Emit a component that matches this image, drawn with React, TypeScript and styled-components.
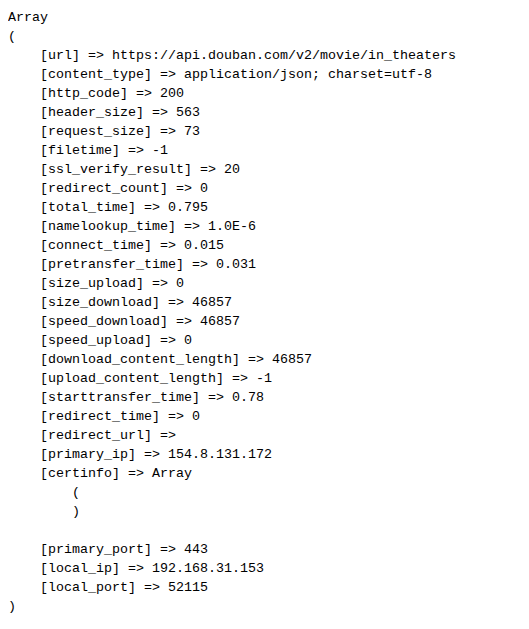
import React from "react";
import styled, { createGlobalStyle } from "styled-components";

const Global = createGlobalStyle`
  html, body { margin: 0; padding: 0; background: #ffffff; }
  body { margin: 8px; }
`;

const Dump = styled.pre`
  margin: 0;
  font-family: "Liberation Mono", "DejaVu Sans Mono", monospace;
  font-size: 13.333px;
  line-height: 19px;
  color: #000000;
  white-space: pre;
`;

const Line = styled.div<{ $indent: number }>`
  padding-left: ${(p) => p.$indent * 8}px;
  height: 19px;
`;

const entries: [string, string][] = [
  ["url", "https://api.douban.com/v2/movie/in_theaters"],
  ["content_type", "application/json; charset=utf-8"],
  ["http_code", "200"],
  ["header_size", "563"],
  ["request_size", "73"],
  ["filetime", "-1"],
  ["ssl_verify_result", "20"],
  ["redirect_count", "0"],
  ["total_time", "0.795"],
  ["namelookup_time", "1.0E-6"],
  ["connect_time", "0.015"],
  ["pretransfer_time", "0.031"],
  ["size_upload", "0"],
  ["size_download", "46857"],
  ["speed_download", "46857"],
  ["speed_upload", "0"],
  ["download_content_length", "46857"],
  ["upload_content_length", "-1"],
  ["starttransfer_time", "0.78"],
  ["redirect_time", "0"],
  ["redirect_url", ""],
  ["primary_ip", "154.8.131.172"],
];

const tail: [string, string][] = [
  ["primary_port", "443"],
  ["local_ip", "192.168.31.153"],
  ["local_port", "52115"],
];

export default function App() {
  return (
    <>
      <Global />
      <Dump>
        <Line $indent={0}>Array</Line>
        <Line $indent={0}>(</Line>
        {entries.map(([k, v]) => (
          <Line key={k} $indent={4}>{`[${k}] => ${v}`}</Line>
        ))}
        <Line $indent={4}>{"[certinfo] => Array"}</Line>
        <Line $indent={8}>(</Line>
        <Line $indent={8}>)</Line>
        <Line $indent={0}>{" "}</Line>
        {tail.map(([k, v]) => (
          <Line key={k} $indent={4}>{`[${k}] => ${v}`}</Line>
        ))}
        <Line $indent={0}>)</Line>
      </Dump>
    </>
  );
}
